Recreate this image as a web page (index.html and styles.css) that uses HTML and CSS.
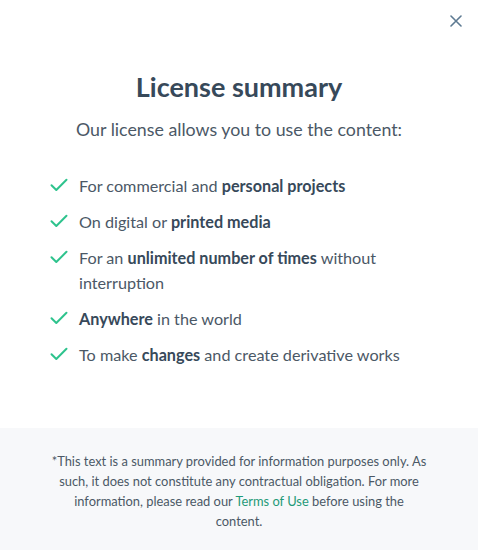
FILE: index.html
```html
<!DOCTYPE html>
<html lang="en">
<head>
<meta charset="utf-8">
<link rel="stylesheet" href="styles.css">
</head>
<body>
<div class="modal">
  <button class="close" aria-label="Close">
    <svg width="12" height="12" viewBox="0 0 12 12"><path d="M1 1L11 11M11 1L1 11" stroke="#5d7a92" stroke-width="1.6" stroke-linecap="round"/></svg>
  </button>
  <div class="main">
    <h1 class="title">License summary</h1>
    <p class="subtitle">Our license allows you to use the content:</p>
    <ul class="list">
      <li class="item"><svg class="check" viewBox="0 0 18 14"><path d="M1.5 7.2L6.3 12L16.5 1.8" fill="none" stroke="#2ec38d" stroke-width="2" stroke-linecap="round" stroke-linejoin="round"/></svg><span>For commercial and <b>personal projects</b></span></li>
      <li class="item"><svg class="check" viewBox="0 0 18 14"><path d="M1.5 7.2L6.3 12L16.5 1.8" fill="none" stroke="#2ec38d" stroke-width="2" stroke-linecap="round" stroke-linejoin="round"/></svg><span>On digital or <b>printed media</b></span></li>
      <li class="item"><svg class="check" viewBox="0 0 18 14"><path d="M1.5 7.2L6.3 12L16.5 1.8" fill="none" stroke="#2ec38d" stroke-width="2" stroke-linecap="round" stroke-linejoin="round"/></svg><span>For an <b>unlimited number of times</b> without interruption</span></li>
      <li class="item"><svg class="check" viewBox="0 0 18 14"><path d="M1.5 7.2L6.3 12L16.5 1.8" fill="none" stroke="#2ec38d" stroke-width="2" stroke-linecap="round" stroke-linejoin="round"/></svg><span><b>Anywhere</b> in the world</span></li>
      <li class="item"><svg class="check" viewBox="0 0 18 14"><path d="M1.5 7.2L6.3 12L16.5 1.8" fill="none" stroke="#2ec38d" stroke-width="2" stroke-linecap="round" stroke-linejoin="round"/></svg><span>To make <b>changes</b> and create derivative works</span></li>
    </ul>
  </div>
  <div class="footer">
    <p>*This text is a summary provided for information purposes only. As such, it does not constitute any contractual obligation. For more information, please read our <a href="#">Terms of Use</a> before using the content.</p>
  </div>
</div>
</body>
</html>
```
FILE: styles.css
```css
* { box-sizing: border-box; }
html, body { margin: 0; padding: 0; background: #ffffff; }
body { font-family: "Lato", "Open Sans", sans-serif; color: #4b5866; }
.modal { width: 478px; height: 550px; position: relative; display: flex; flex-direction: column; background: #fff; }
.close { position: absolute; top: 14px; right: 15px; width: 14px; height: 14px; padding: 0; border: 0; background: transparent; display: flex; align-items: center; justify-content: center; }
.main { padding: 71px 0 0 0; flex: 1; }
.title { margin: 0; text-align: center; font-size: 27px; font-weight: 700; color: #37495a; line-height: 32px; }
.subtitle { margin: 14px 0 0; text-align: center; font-size: 17.8px; line-height: 24px; color: #4b5866; }
.list { list-style: none; margin: 32px 0 0; padding: 0 50px 0 50px; display: flex; flex-direction: column; gap: 11px; }
.item { display: flex; align-items: flex-start; gap: 11px; font-size: 16.2px; line-height: 25px; color: #4b5866; }
.item b { color: #37495a; font-weight: 700; }
.check { width: 18px; height: 14px; flex: none; margin-top: 5px; }
.footer { height: 122px; background: #f7f8fa; padding: 23px 50px 0; }
.footer p { margin: 0; text-align: center; font-size: 12.9px; line-height: 20px; color: #4b5866; }
.footer a { color: #1f9a78; text-decoration: none; }
```
